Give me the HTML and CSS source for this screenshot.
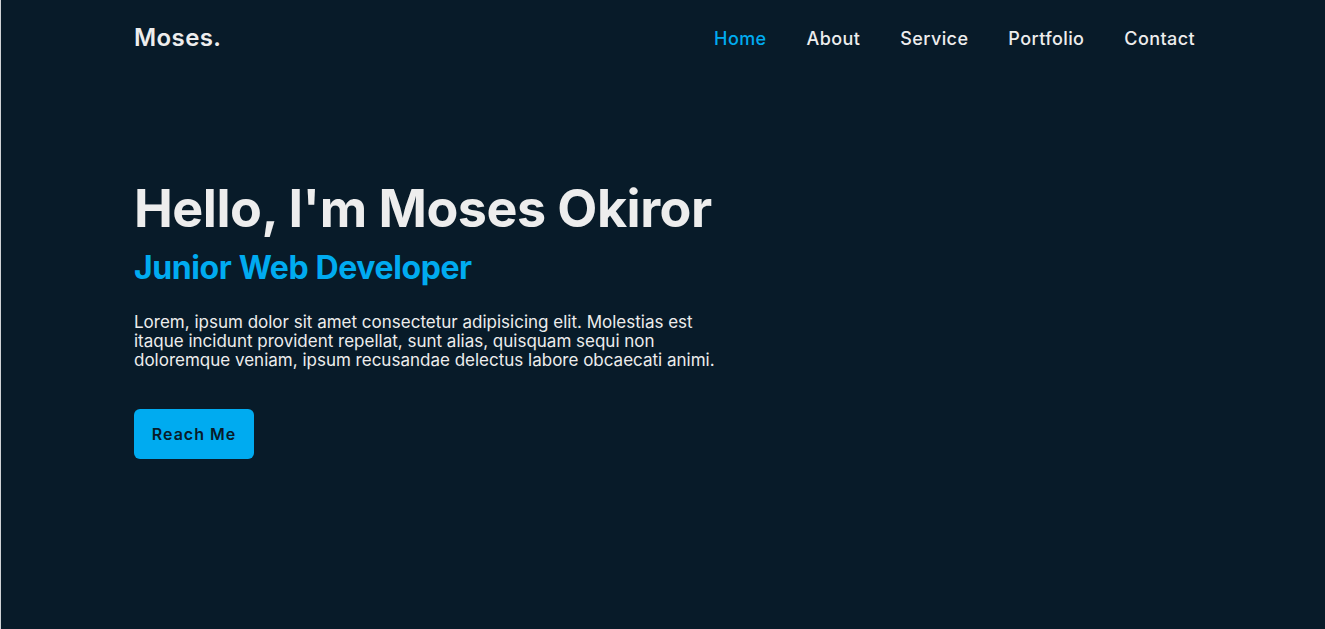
FILE: index.html
```html
<!DOCTYPE html>
<html lang="en">
<head>
<meta charset="utf-8">
<title>Moses Okiror</title>
<link rel="stylesheet" href="styles.css">
</head>
<body>
<div class="page">
  <header class="header">
    <a href="#" class="logo">Moses.</a>
    <nav class="nav">
      <a href="#" class="active">Home</a>
      <a href="#">About</a>
      <a href="#">Service</a>
      <a href="#">Portfolio</a>
      <a href="#">Contact</a>
    </nav>
  </header>
  <section class="home">
    <div class="home-content">
      <h1>Hello, I'm Moses Okiror</h1>
      <h3>Junior Web Developer</h3>
      <p>Lorem, ipsum dolor sit amet consectetur adipisicing elit. Molestias est itaque incidunt provident repellat, sunt alias, quisquam sequi non doloremque veniam, ipsum recusandae delectus labore obcaecati animi.</p>
      <a href="#" class="btn">Reach Me</a>
    </div>
  </section>
</div>
</body>
</html>
```
FILE: styles.css
```css
* {
  margin: 0;
  padding: 0;
  box-sizing: border-box;
}
html, body {
  height: 100%;
}
body {
  background: #081b29;
  color: #ededed;
  font-family: Inter, "Noto Sans", sans-serif;
  border-left: 1px solid #cfd3d6;
}
.page {
  min-height: 100%;
}
a {
  text-decoration: none;
}
.header {
  display: flex;
  justify-content: space-between;
  align-items: flex-start;
  padding: 22px 130px 0 133px;
  height: 76px;
}
.logo {
  font-size: 24px;
  font-weight: 600;
  color: #ededed;
  line-height: 32px;
  letter-spacing: 0.4px;
}
.nav {
  display: flex;
  gap: 40px;
  padding-top: 5px;
}
.nav a {
  font-size: 18px;
  font-weight: 500;
  color: #ededed;
  line-height: 24px;
  letter-spacing: 0.4px;
}
.nav a.active {
  color: #00abf0;
}
.home {
  padding: 100px 133px 0 133px;
}
.home-content {
  max-width: 600px;
}
.home-content h1 {
  font-size: 52px;
  font-weight: 700;
  line-height: 66px;
  letter-spacing: -0.5px;
  color: #ededed;
}
.home-content h3 {
  font-size: 32px;
  font-weight: 700;
  color: #00abf0;
  line-height: 40px;
  letter-spacing: -0.4px;
  margin-top: 6px;
}
.home-content p {
  font-size: 17px;
  line-height: 19px;
  margin-top: 25px;
  color: #ededed;
  letter-spacing: 0;
}
.btn {
  display: inline-flex;
  align-items: center;
  justify-content: center;
  width: 120px;
  height: 50px;
  background: #00abf0;
  color: #081b29;
  border-radius: 6px;
  font-size: 16px;
  font-weight: 600;
  letter-spacing: 1px;
  margin-top: 39px;
}
```
